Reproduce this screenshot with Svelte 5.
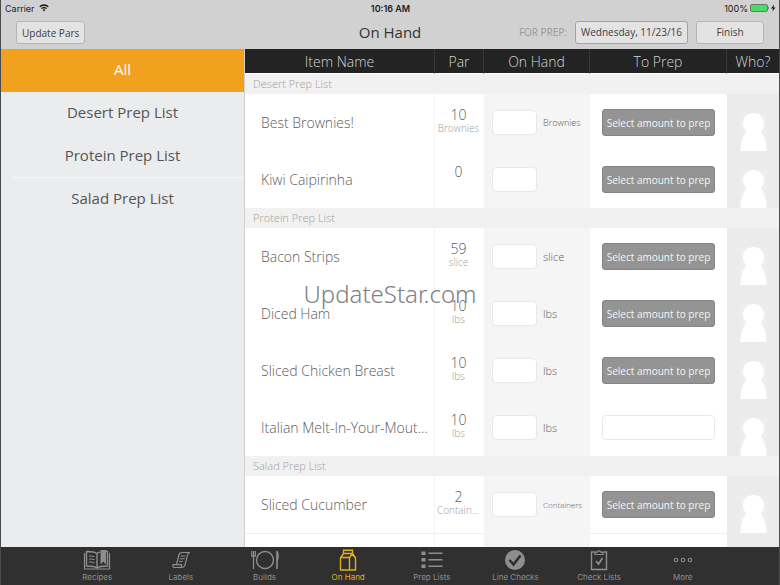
<script lang="ts">
	interface Item {
		name: string
		par: number
		unit: string
		small?: number
		select: boolean
	}

	interface Section {
		title: string
		items: Array<Item>
	}

	const sections: Array<Section> = [
		{
			title: 'Desert Prep List',
			items: [
				{ name: 'Best Brownies!', par: 10, unit: 'Brownies', small: 1, select: true },
				{ name: 'Kiwi Caipirinha', par: 0, unit: '', select: true }
			]
		},
		{
			title: 'Protein Prep List',
			items: [
				{ name: 'Bacon Strips', par: 59, unit: 'slice', select: true },
				{ name: 'Diced Ham', par: 10, unit: 'lbs', select: true },
				{ name: 'Sliced Chicken Breast', par: 10, unit: 'lbs', select: true },
				{ name: 'Italian Melt-In-Your-Mouth Meatballs', par: 10, unit: 'lbs', select: false }
			]
		},
		{
			title: 'Salad Prep List',
			items: [{ name: 'Sliced Cucumber', par: 2, unit: 'Containers', small: 2, select: true }]
		}
	]

	const filters: Array<string> = ['All', ...sections.map((section) => section.title)]
	const tabs: Array<string> = ['Recipes', 'Labels', 'Builds', 'On Hand', 'Prep Lists', 'Line Checks', 'Check Lists', 'More']

	let filter: string = $state('All')
	let activeTab: string = $state('On Hand')

	let visible: Array<Section> = $derived(
		filter === 'All' ? sections : sections.filter((section) => section.title === filter)
	)
</script>

<div class="app">
	<header>
		<div class="status">
			<span class="carrier">
				Carrier
				<svg width="10" height="8" viewBox="0 0 20 16" fill="none" stroke="#111" stroke-width="2.6">
					<path d="M1.5 5.5a12 12 0 0 1 17 0M5 9.2a7 7 0 0 1 10 0" />
					<path d="M7.3 11.6a4 4 0 0 1 5.4 0L10 15z" fill="#111" stroke="none" />
				</svg>
			</span>
			<span class="clock">10:16 AM</span>
			<span class="battery">
				100%
				<svg width="26" height="8" viewBox="0 0 26 8">
					<rect x="0.5" y="0.5" width="17" height="7" rx="1.5" fill="#4cd964" stroke="#555" stroke-width="0.7" />
					<path d="M18.3 2.6q1.4 1.4 0 2.8z" fill="#222" />
					<path d="M24 0.5 21 4.5h2L22.4 7.6 25.5 3.6h-2z" fill="#111" />
				</svg>
			</span>
		</div>
		<div class="nav">
			<div><button class="bar-button">Update Pars</button></div>
			<h1>On Hand</h1>
			<div class="actions">
				<span class="for-prep">FOR PREP:</span>
				<button class="bar-button date">Wednesday, 11/23/16</button>
				<button class="bar-button finish">Finish</button>
			</div>
		</div>
	</header>

	<main>
		<nav class="sidebar">
			{#each filters as name}
				<button class:selected={filter === name} onclick={() => (filter = name)}>{name}</button>
			{/each}
		</nav>

		<div class="list">
			<table>
				<colgroup>
					<col />
					<col class="col-par" />
					<col class="col-hand" />
					<col class="col-prep" />
					<col class="col-who" />
				</colgroup>
				<thead>
					<tr>
						<th>Item Name</th>
						<th>Par</th>
						<th>On Hand</th>
						<th>To Prep</th>
						<th>Who?</th>
					</tr>
				</thead>
				<tbody>
					{#each visible as section}
						<tr class="section"><th colspan="5">{section.title}</th></tr>
						{#each section.items as item}
							<tr class="item">
								<td class="name">{item.name}</td>
								<td class="par">
									<div class="amount">{item.par}</div>
									<div class="unit">{item.unit}</div>
								</td>
								<td class="hand">
									<label class="on-hand">
										<input type="text" aria-label={`${item.name} on hand`} />
										<span class:small={item.small === 1} class:tiny={item.small === 2}>{item.unit}</span>
									</label>
								</td>
								<td class="prep">
									{#if item.select}
										<button class="select">Select amount to prep</button>
									{:else}
										<input type="text" aria-label={`${item.name} to prep`} />
									{/if}
								</td>
								<td class="who">
									<svg class="person" width="27" height="38" viewBox="0 0 27 38">
										<rect width="27" height="38" fill="#eeeeee" />
										<path
											d="M13.5 0a10.5 10.5 0 0 1 8 17.300c-.7 1.200-.2 2.200.8 3.700C25 25 26.500 31 26.500 38H.5c0-7 1.500-13 4.200-17 1-1.500 1.500-2.500.8-3.700A10.500 10.500 0 0 1 13.500 0z"
											fill="#fff"
										/>
									</svg>
								</td>
							</tr>
						{/each}
					{/each}
					<tr class="item blank">
						<td class="name"></td>
						<td class="par"></td>
						<td class="hand"></td>
						<td class="prep"></td>
						<td class="who"></td>
					</tr>
				</tbody>
			</table>
		</div>
		<div class="watermark">UpdateStar.com</div>
	</main>

	<footer>
		{#each tabs as tab}
			<button class="tab" class:active={activeTab === tab} onclick={() => (activeTab = tab)}>
				<svg width="28" height="22" viewBox="0 0 28 22" fill="none" stroke="currentColor" stroke-width="1.4">
					{#if tab === 'Recipes'}
						<path d="M14 4.500C12 3 8 2.500 3.500 2.500v14.500C8 17 12 17.500 14 19c2-1.500 6-2 10.500-2V2.500H23M14 4.500V19M14 4.500c1-.8 2-1.200 3-1.500" />
						<path d="M1.500 4v16h25V4" stroke-width="1.200" />
						<path d="M6 7c2 0 4 .2 5.500.7M6 10c2 0 4 .2 5.500.7M6 13c2 0 4 .2 5.500.7" stroke-width="1" />
						<path d="M17.500 1h5.500v14.500l-2.700-3-2.800 3z" fill="currentColor" stroke="none" />
					{:else if tab === 'Labels'}
						<path d="M9.500 15.500 12 5.500c.5-1.700 1.500-2 3-2h8c-1.500 0-2 .8-2.400 2.200L18 16c-.5 1.700-1.200 2.500-2.700 2.500H7c-1 0-1.500-1.500-1-2.800h8.500c-.3 1.400 0 2.800 1 2.800" stroke-width="1.2" />
						<path d="M13.500 7h5M12.800 9.700h5M12 12.500h3.500" stroke-width="1.1" />
					{:else if tab === 'Builds'}
						<circle cx="14" cy="11" r="8.500" />
						<path d="M.7 2v5.200h3.600V2M2.500 2v18" stroke-width="1.2" />
						<path d="M26 2v18" stroke-width="1.6" />
						<path d="M26 1.500c2.300 2.500 2.300 8 .5 10.500H26z" fill="currentColor" stroke="none" />
					{:else if tab === 'On Hand'}
						<path d="M9.500 1.200h9v3.300h-9zM9.500 4.500 6.500 9v12h15V9l-3-4.500M6.500 8.500h9.500M18 5l-2.500 4v12M18 5l3.500 4" />
					{:else if tab === 'Prep Lists'}
						<path d="M3.500 2.500h4v3.500h-4zM3.500 9h4v3.500h-4zM3.500 15.500h4V19h-4z" fill="currentColor" stroke="none" />
						<path d="M10.500 4.300h14M10.500 10.800h14M10.500 17.300h14" stroke-width="1.6" />
					{:else if tab === 'Line Checks'}
						<circle cx="14" cy="11" r="10" fill="currentColor" stroke="none" />
						<path d="m8.500 11 4 4.500 7-9" stroke="#303030" stroke-width="2.600" />
					{:else if tab === 'Check Lists'}
						<path d="M9.500 3H6.500v17.500h15V3h-3" />
						<path d="M10 5.500V3.200h2.200a1.900 1.900 0 0 1 3.600 0H18v2.300z" stroke-width="1.2" />
						<path d="m11 12 2.500 3 4-6" stroke-width="1.7" />
					{:else}
						<circle cx="7" cy="11" r="1.800" stroke-width="1.1" />
						<circle cx="14" cy="11" r="1.800" stroke-width="1.1" />
						<circle cx="21" cy="11" r="1.800" stroke-width="1.1" />
					{/if}
				</svg>
				{tab}
			</button>
		{/each}
	</footer>
</div>

<style>
	:global(body) {
		background: #fff;
		font-family: 'Open Sans', 'Noto Sans', sans-serif;
	}

	.app {
		box-sizing: border-box;
		height: 100vh;
		display: flex;
		flex-direction: column;
		overflow: hidden;
		border: solid #4a4a4e;
		border-width: 0 1px;
	}

	button,
	input {
		box-sizing: border-box;
		margin: 0;
		font-family: inherit;
	}

	header {
		flex: none;
		height: 49px;
		background: #d1d1d1;
	}

	.status {
		display: grid;
		grid-template-columns: 1fr auto 1fr;
		align-items: center;
		height: 16px;
		padding: 0 3px 0 4px;
		color: #1c1c1c;
		font-family: Inter, 'Liberation Sans', sans-serif;
		font-size: 9px;
	}

	.carrier,
	.battery {
		display: flex;
		align-items: center;
		gap: 4px;
	}

	.battery {
		justify-content: flex-end;
		gap: 2px;
	}

	.clock {
		font-weight: 600;
	}

	.nav {
		display: grid;
		grid-template-columns: 1fr auto 1fr;
		align-items: center;
		height: 32px;
		padding: 0 15px;
	}

	h1 {
		margin: 0;
		color: #333;
		font-size: 15px;
		font-weight: 400;
	}

	.actions {
		display: flex;
		justify-content: flex-end;
		align-items: center;
		gap: 8px;
	}

	.for-prep {
		color: #999;
		font-size: 10px;
	}

	.bar-button {
		height: 23px;
		padding: 0 5px;
		border: 1px solid #b4b4b4;
		border-radius: 3px;
		background: #e3e3e3;
		color: #404040;
		font-size: 10px;
	}

	.date {
		border-color: #a2a2a2;
	}

	.finish {
		width: 68px;
	}

	main {
		position: relative;
		flex: 1;
		min-height: 0;
		display: flex;
	}

	.sidebar {
		box-sizing: border-box;
		flex: none;
		width: 244px;
		display: flex;
		flex-direction: column;
		border-right: 1px solid #cfd0d1;
		background: #ebecee;
	}

	.sidebar button {
		height: 43px;
		padding: 0 0 2px;
		border: 0;
		border-bottom: 1px solid #e9eaec;
		background: none;
		color: #555;
		font-size: 15px;
	}

	.sidebar button:nth-child(3) {
		border-image: linear-gradient(to right, transparent 12px, #f5f5f6 12px) 1;
	}

	.sidebar .selected {
		border-color: #f2a31f;
		background: #f2a11e;
		color: #fff;
	}

	.list {
		flex: 1;
		min-width: 0;
		overflow: hidden;
	}

	table {
		width: 100%;
		table-layout: fixed;
		border-collapse: separate;
		border-spacing: 0;
		color: #5c5c5c;
		font-weight: 300;
	}

	.col-par {
		width: 49px;
	}

	.col-hand {
		width: 106px;
	}

	.col-prep {
		width: 137px;
	}

	.col-who {
		width: 52px;
	}

	th,
	td {
		box-sizing: border-box;
		padding: 0;
		font-weight: 300;
	}

	thead th {
		height: 25px;
		padding-top: 2px;
		border-right: 1px solid #383838;
		border-bottom: 1px solid #fff;
		background: #232323;
		background-clip: padding-box;
		color: #d4d4d4;
		font-size: 14px;
		line-height: 20px;
	}

	thead th:last-child {
		border-right: 0;
	}

	.section th {
		height: 20px;
		padding-left: 8px;
		background: #f1f1f1;
		color: #a0a0a0;
		font-size: 11px;
		line-height: 18px;
		text-align: left;
	}

	.item td {
		height: 57px;
	}

	.name {
		padding: 0 2px 0 16px;
		border-right: 1px solid #f3f3f3;
		overflow: hidden;
		font-size: 14px;
		text-overflow: ellipsis;
		white-space: nowrap;
	}

	.par {
		padding: 14px 4px 0 2px;
		text-align: center;
		vertical-align: top;
	}

	.amount {
		font-size: 14px;
		line-height: 14px;
	}

	.unit {
		overflow: hidden;
		color: #a0a0a0;
		font-size: 10px;
		line-height: 12px;
		text-overflow: ellipsis;
		white-space: nowrap;
	}

	.hand {
		padding-left: 8px;
		background: #f5f5f5;
	}

	.on-hand {
		display: flex;
		align-items: center;
		gap: 6px;
		font-size: 11px;
	}

	.small {
		font-size: 9px;
	}

	.tiny {
		font-size: 8px;
	}

	input {
		height: 25px;
		padding: 0 4px;
		border: 1px solid #e8e8e8;
		border-radius: 4px;
		background: #fff;
	}

	.on-hand input {
		width: 45px;
	}

	.prep {
		padding: 0 12px;
	}

	.prep input,
	.select {
		display: block;
		width: 100%;
	}

	.select {
		height: 27px;
		padding: 0;
		border: 1px solid #848484;
		border-radius: 3px;
		background: #949494;
		color: #f4f4f4;
		font-size: 10px;
		white-space: nowrap;
	}

	.who {
		background: #ebebeb;
		vertical-align: bottom;
	}

	.person {
		display: block;
		margin: 0 auto;
	}

	.blank .name,
	.blank .par,
	.blank .prep {
		border-top: 1px solid #f0f0f0;
	}

	.watermark {
		position: absolute;
		top: 233px;
		left: 0;
		right: 0;
		color: #808080;
		font-family: 'Noto Sans', sans-serif;
		font-size: 24px;
		font-weight: 300;
		line-height: 1;
		text-align: center;
		pointer-events: none;
	}

	footer {
		flex: none;
		display: flex;
		height: 38px;
		padding: 0 7%;
		background: #303030;
	}

	.tab {
		flex: 1 1 0;
		display: flex;
		flex-direction: column;
		align-items: center;
		padding: 2px 0 0;
		border: 0;
		background: none;
		color: #8e8e8e;
		font-family: Inter, 'Liberation Sans', sans-serif;
		font-size: 8px;
		line-height: 12px;
	}

	.active {
		color: #e5ad16;
	}
</style>
